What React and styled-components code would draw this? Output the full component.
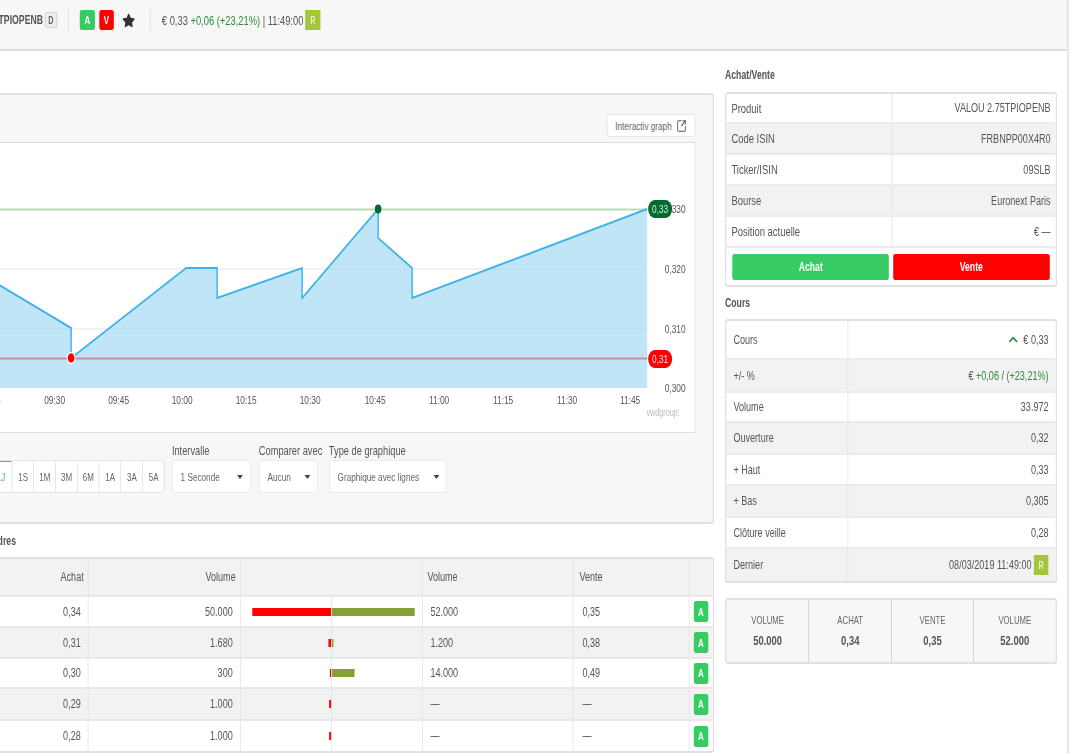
import React from 'react';
import styled, { createGlobalStyle } from 'styled-components';
import { SquareArrowOutUpRight } from 'lucide-react';
import { FaStar, FaChevronUp } from 'react-icons/fa';

const K = 0.725;
const x = (n) => n / K;

const Global = createGlobalStyle`
  html, body { margin: 0; padding: 0; background: #fff; overflow: hidden; }
  * { box-sizing: border-box; }
`;

const Viewport = styled.div`
  width: 1074px; height: 753px; overflow: hidden; background: #fff;
  font-family: "Liberation Sans", Arial, sans-serif; font-size: 12.5px; color: #555;
`;
const Stage = styled.div`
  width: ${x(1069)}px; height: 753px; transform: scaleX(${K}); transform-origin: 0 0;
  border-right: 2px solid #dedede;
`;
const TopBar = styled.header`
  height: 51px; background: #f7f7f7; border-bottom: 2px solid #dedede;
  display: flex; align-items: center; padding-bottom: 9px;
`;
const Title = styled.div`
  flex: none; width: ${x(143)}px; margin-left: ${x(-100)}px; text-align: right;
  font-weight: bold; font-size: 12px; color: #555; white-space: nowrap;
`;
const Badge = styled.span`
  flex: none; width: ${x(12)}px; height: 16px; margin-left: ${x(2)}px; border: 1px solid #ccc; border-radius: 3px;
  background: #eee; color: #666; font-size: 10px; font-weight: bold;
  display: flex; align-items: center; justify-content: center;
`;
const Divider = styled.span`
  flex: none; width: ${x(1)}px; height: ${(p) => p.$h}px; background: #ddd; margin: 0 ${(p) => p.$r}px 0 ${(p) => p.$l}px;
`;
const Square = styled.span`
  flex: none; width: ${x(15)}px; height: ${(p) => p.$h || 20}px; border-radius: 3px;
  background: ${(p) => p.$bg}; color: #fff; font-size: 11px; font-weight: bold;
  display: flex; align-items: center; justify-content: center;
  margin-left: ${(p) => (p.$ml ? x(p.$ml) : 0)}px;
`;
const StarWrap = styled.span`
  flex: none; display: flex; margin-left: ${x(9)}px; color: #333; font-size: 15px;
  transform: scaleX(${(1 / K) * 0.85});
`;
const Quote = styled.span`
  flex: none; font-size: 12.9px; color: #555; white-space: nowrap;
`;
const Up = styled.span`color: #2e8b3d;`;
const RBadge = styled.span`
  flex: none; width: ${x(15)}px; height: 20px; background: #a5c63b; color: #e8f0c8;
  font-size: 10px; font-weight: bold; display: flex; align-items: center; justify-content: center;
  margin-left: ${(p) => x(p.$ml || 2)}px;
`;
const Main = styled.main`
  display: grid; grid-template-columns: ${x(734)}px ${x(332)}px; column-gap: ${x(11)}px;
  margin-left: ${x(-20)}px;
`;
const LeftCol = styled.section`padding-top: 42px;`;
const RightCol = styled.aside`padding-top: 17px;`;
const ChartPanel = styled.div`
  height: 431px; background: #f7f7f7; border: 2px solid #e2e2e2; border-radius: 4px;
  padding: 19px ${x(17)}px 0 ${x(7)}px;
`;
const ChartTools = styled.div`display: flex; justify-content: flex-end; height: 28px;`;
const LinkButton = styled.button`
  font: inherit; font-size: 11.3px; color: #666; background: #fff; width: ${x(89)}px; height: 23px;
  border: 1px solid #e2e2e2; border-radius: 3px; display: flex; align-items: center; justify-content: center; gap: ${x(5)}px; padding: 0;
  svg { color: #555; }
`;
const ChartBox = styled.div`
  height: 291px; background: #fff; border: 1px solid #ddd; overflow: hidden;
`;
const Controls = styled.div`display: flex; align-items: flex-end; margin-top: 11px; padding-left: ${x(1)}px;`;
const Periods = styled.div`
  display: flex; height: 33px; background: #fff; border: 1px solid #e0e0e0; border-radius: 4px; margin-right: ${x(7)}px;
`;
const Period = styled.span`
  width: ${x(21.75)}px; display: flex; align-items: center; justify-content: center; font-size: 11px;
  color: ${(p) => (p.$on ? '#36b1e8' : '#666')};
  border-top: 1px solid ${(p) => (p.$on ? '#36b1e8' : 'transparent')};
  border-left: ${(p) => (p.$first ? 'none' : `${x(1)}px solid #ddd`)};
`;
const Field = styled.div`
  width: ${(p) => x(p.$w)}px; margin-right: ${(p) => x(p.$mr)}px; flex: none;
`;
const FieldLabel = styled.div`font-size: 12.8px; color: #555; white-space: nowrap; line-height: 14px; margin-bottom: 2px;`;
const Select = styled.div`
  height: 33px; background: #fff; border: 1px solid #e6e6e6; border-radius: 4px; font-size: 11.3px; color: #666;
  display: flex; align-items: center; justify-content: space-between; padding: 0 ${x(7)}px 0 ${x(8)}px; white-space: nowrap;
`;
const Caret = styled.i`
  width: 0; height: 0; border-left: ${x(3)}px solid transparent; border-right: ${x(3)}px solid transparent; border-top: 4px solid #444;
`;
const SectionTitle = styled.h3`
  margin: 0; font-size: 12px; font-weight: bold; color: #555; line-height: 14px;
  padding: ${(p) => p.$pt}px 0 ${(p) => p.$pb}px 0;
`;
const OrdersTitle = styled(SectionTitle)`
  width: ${x(36)}px; text-align: right; white-space: nowrap; display: flex; justify-content: flex-end;
`;
const Table = styled.div`
  border: 2px solid #e0e0e0; border-radius: 4px; overflow: hidden;
`;
const OrderRow = styled.div`
  display: grid; grid-template-columns: ${x(107)}px ${x(152)}px ${x(182)}px ${x(151)}px ${x(116)}px 1fr;
  height: ${(p) => p.$h}px; background: ${(p) => (p.$alt ? '#f2f2f2' : '#fff')};
  border-bottom: 2px solid #e8e8e8;
  &:last-child { border-bottom: none; }
`;
const OrderCell = styled.div`
  display: flex; align-items: center; padding: 0 ${(p) => x(p.$pr || 0)}px 0 ${(p) => x(p.$pl || 0)}px;
  justify-content: ${(p) => (p.$right ? 'flex-end' : p.$center ? 'center' : 'flex-start')};
  border-right: ${(p) => (p.$last ? 'none' : `${x(1)}px solid #e2e2e2`)};
`;
const BarCell = styled.div`
  display: grid; grid-template-columns: 1fr 1fr; border-right: ${x(1)}px solid #e2e2e2;
`;
const BarSide = styled.div`
  display: flex; align-items: center; justify-content: ${(p) => (p.$left ? 'flex-end' : 'flex-start')};
  border-left: ${(p) => (p.$left ? 'none' : `${x(1)}px solid #ddd`)};
`;
const Bar = styled.div`height: 8px; background: ${(p) => p.$bg};`;
const InfoRow = styled.div`
  display: grid; grid-template-columns: ${(p) => x(p.$split)}px 1fr; height: ${(p) => p.$h}px;
  background: ${(p) => (p.$alt ? '#f2f2f2' : '#fff')}; border-bottom: 2px solid #ebebeb;
  &:last-child { border-bottom: none; }
`;
const InfoLabel = styled.div`
  display: flex; align-items: center; padding-left: ${(p) => x(p.$pad)}px; border-right: ${x(1)}px solid #e0e0e0;
  font-size: ${(p) => p.$fs || 12.5}px;
`;
const InfoValue = styled.div`
  display: flex; align-items: center; justify-content: flex-end; padding-right: ${(p) => x(p.$pad)}px; white-space: nowrap;
`;
const Arrow = styled.span`
  display: flex; color: #2e8b3d; font-size: 11px; margin-right: ${x(6)}px; transform: scaleX(1.25);
`;
const Actions = styled.div`
  display: flex; gap: ${x(4)}px; padding: 6px ${x(6)}px 5px; background: #fff;
`;
const ActionButton = styled.button`
  flex: 1; height: 26px; border: none; border-radius: 3px; background: ${(p) => p.$bg}; color: #fff;
  font: bold 12px "Liberation Sans", Arial, sans-serif; padding: 0;
`;
const Stats = styled.div`
  margin-top: 15px; height: 66px; display: grid; grid-template-columns: repeat(4, 1fr);
  background: #f7f7f7; border: 2px solid #e0e0e0; border-radius: 4px;
`;
const Stat = styled.div`
  display: flex; flex-direction: column; align-items: center; justify-content: center; gap: 7px;
  border-left: ${(p) => (p.$first ? 'none' : `${x(1)}px solid #c9c9c9`)};
`;
const StatLabel = styled.span`font-size: 10.7px; color: #666;`;
const StatValue = styled.strong`font-size: 13px; color: #555;`;

const X = (sx) => (sx + 11) / K;
const Y = (sy) => sy - 143;
const pts = [[-11, 279], [71, 328], [71, 358], [186, 268], [217, 268], [217, 298], [302, 268], [302, 298], [378, 209], [378, 238], [412, 268], [412, 298], [647, 209]];
const line = pts.map(([a, b]) => `${X(a)},${Y(b)}`).join(' ');
const area = `${X(-11)},${Y(388)} ${line} ${X(647)},${Y(388)}`;
const times = [['09:15', -10], ['09:30', 54.5], ['09:45', 118.5], ['10:00', 182], ['10:15', 246], ['10:30', 310], ['10:45', 375], ['11:00', 439], ['11:15', 503], ['11:30', 567], ['11:45', 630]];
const prices = [['0,330', 209], ['0,320', 269], ['0,310', 329], ['0,300', 388]];

const Chart = () => (
  <svg width={X(696)} height="289" style={{ display: 'block' }}>
    {[269, 329].map((g) => <line key={g} x1={X(-11)} x2={X(647)} y1={Y(g)} y2={Y(g)} stroke="#f7f7f7" strokeWidth="2" />)}
    <polygon points={area} fill="#bfe5f7" />
    {[269, 329].map((g) => <line key={g} x1={X(-11)} x2={X(647)} y1={Y(g)} y2={Y(g)} stroke="rgba(0,0,0,0.02)" strokeWidth="2" />)}
    <line x1={X(-11)} x2={X(647)} y1={Y(209.5)} y2={Y(209.5)} stroke="#b9dcb6" strokeWidth="2" />
    <line x1={X(-11)} x2={X(647)} y1={Y(358.5)} y2={Y(358.5)} stroke="#c48fa0" strokeWidth="2" />
    <polyline points={line} fill="none" stroke="#3db3ea" strokeWidth="2" />
    <circle cx={X(71)} cy={Y(358)} r="5.5" fill="#f00" stroke="#fff" strokeWidth="1.5" />
    <circle cx={X(378)} cy={Y(209)} r="4.5" fill="#006b2d" />
    {times.map(([t, p]) => (
      <text key={t} x={X(p)} y={Y(404)} textAnchor="middle" fontSize="11.5" fill="#555">{t}</text>
    ))}
    {prices.map(([t, p]) => (
      <text key={t} x={X(675)} y={Y(p + 4)} textAnchor="middle" fontSize="11.5" fill="#555">{t}</text>
    ))}
    <rect x={X(648)} y={Y(200)} width={x(24)} height="18" rx="9" fill="#006b2d" />
    <text x={X(660)} y={Y(213)} textAnchor="middle" fontSize="11.5" fill="#d5ecd9">0,33</text>
    <rect x={X(648)} y={Y(350)} width={x(24)} height="18" rx="9" fill="#f00" />
    <text x={X(660)} y={Y(363)} textAnchor="middle" fontSize="11.5" fill="#fde">0,31</text>
    <text x={X(663)} y={Y(416)} textAnchor="middle" fontSize="10" fill="#bbb">vwdgroup:</text>
  </svg>
);

const orders = [
  ['0,34', '50.000', 79, 83, '52.000', '0,35'],
  ['0,31', '1.680', 3, 2, '1.200', '0,38'],
  ['0,30', '300', 1, 23, '14.000', '0,49'],
  ['0,29', '1.000', 2, 0, '—', '—'],
  ['0,28', '1.000', 2, 0, '—', '—'],
];
const heights = [31, 31, 30, 32, 30];

const product = [['Produit', 'VALOU 2.75TPIOPENB', 30], ['Code ISIN', 'FRBNPP00X4R0', 31], ['Ticker/ISIN', '09SLB', 31], ['Bourse', 'Euronext Paris', 31], ['Position actuelle', '€ —', 31]];
const course = [
  ['Cours', <><Arrow><FaChevronUp /></Arrow>€ 0,33</>, 39],
  ['+/- %', <>€&nbsp;<Up>+0,06</Up>&nbsp;/&nbsp;<Up>(+23,21%)</Up></>, 33],
  ['Volume', '33.972', 30],
  ['Ouverture', '0,32', 32],
  ['+ Haut', '0,33', 31],
  ['+ Bas', '0,305', 32],
  ['Clôture veille', '0,28', 31],
  ['Dernier', <>08/03/2019 11:49:00<RBadge>R</RBadge></>, 32],
];

export default function App() {
  return (
    <Viewport>
      <Global />
      <Stage>
        <TopBar>
          <Title>VALOU 2.75TPIOPENB</Title>
          <Badge>D</Badge>
          <Divider $h={26} $l={x(11)} $r={x(11)} />
          <Square $bg="#37cc63">A</Square>
          <Square $bg="#f00" $ml={4}>V</Square>
          <StarWrap><FaStar /></StarWrap>
          <Divider $h={22} $l={x(16)} $r={x(11)} />
          <Quote>€ 0,33 <Up>+0,06 (+23,21%)</Up> | 11:49:00</Quote>
          <RBadge>R</RBadge>
        </TopBar>
        <Main>
          <LeftCol>
            <ChartPanel>
              <ChartTools>
                <LinkButton>Interactiv graph <SquareArrowOutUpRight size={14} strokeWidth={2} /></LinkButton>
              </ChartTools>
              <ChartBox><Chart /></ChartBox>
              <Controls>
                <Periods>
                  {['1J', '1S', '1M', '3M', '6M', '1A', '3A', '5A'].map((p, i) => (
                    <Period key={p} $on={i === 0} $first={i === 0}>{p}</Period>
                  ))}
                </Periods>
                <Field $w={79} $mr={8}>
                  <FieldLabel>Intervalle</FieldLabel>
                  <Select>1 Seconde<Caret /></Select>
                </Field>
                <Field $w={59} $mr={11}>
                  <FieldLabel>Comparer avec</FieldLabel>
                  <Select>Aucun<Caret /></Select>
                </Field>
                <Field $w={118} $mr={0}>
                  <FieldLabel>Type de graphique</FieldLabel>
                  <Select>Graphique avec lignes<Caret /></Select>
                </Field>
              </Controls>
            </ChartPanel>
            <OrdersTitle $pt={10} $pb={9}>Ordres</OrdersTitle>
            <Table>
              <OrderRow $h={38} $alt>
                <OrderCell $right $pr={4}>Achat</OrderCell>
                <OrderCell $right $pr={4}>Volume</OrderCell>
                <OrderCell />
                <OrderCell $pl={5}>Volume</OrderCell>
                <OrderCell $pl={6}>Vente</OrderCell>
                <OrderCell $last />
              </OrderRow>
              {orders.map((o, i) => (
                <OrderRow key={o[0]} $h={heights[i]} $alt={i % 2 === 1}>
                  <OrderCell $right $pr={7}>{o[0]}</OrderCell>
                  <OrderCell $right $pr={7}>{o[1]}</OrderCell>
                  <BarCell>
                    <BarSide $left><Bar $bg="#f00" style={{ width: x(o[2]) }} /></BarSide>
                    <BarSide><Bar $bg="#86a037" style={{ width: x(o[3]) }} /></BarSide>
                  </BarCell>
                  <OrderCell $pl={8}>{o[4]}</OrderCell>
                  <OrderCell $pl={9}>{o[5]}</OrderCell>
                  <OrderCell $last $center><Square $bg="#37cc63" $h={21}>A</Square></OrderCell>
                </OrderRow>
              ))}
            </Table>
          </LeftCol>
          <RightCol>
            <SectionTitle $pt={0} $pb={10}>Achat/Vente</SectionTitle>
            <Table>
              {product.map(([k, v, h], i) => (
                <InfoRow key={k} $h={h} $split={166} $alt={i % 2 === 1}>
                  <InfoLabel $pad={5} $fs={13}>{k}</InfoLabel>
                  <InfoValue $pad={5}>{v}</InfoValue>
                </InfoRow>
              ))}
              <Actions>
                <ActionButton $bg="#37cc63">Achat</ActionButton>
                <ActionButton $bg="#f00">Vente</ActionButton>
              </Actions>
            </Table>
            <SectionTitle $pt={9} $pb={9}>Cours</SectionTitle>
            <Table>
              {course.map(([k, v, h], i) => (
                <InfoRow key={k} $h={h} $split={122} $alt={i % 2 === 1}>
                  <InfoLabel $pad={7}>{k}</InfoLabel>
                  <InfoValue $pad={7}>{v}</InfoValue>
                </InfoRow>
              ))}
            </Table>
            <Stats>
              {[['VOLUME', '50.000'], ['ACHAT', '0,34'], ['VENTE', '0,35'], ['VOLUME', '52.000']].map(([l, v], i) => (
                <Stat key={i} $first={i === 0}>
                  <StatLabel>{l}</StatLabel>
                  <StatValue>{v}</StatValue>
                </Stat>
              ))}
            </Stats>
          </RightCol>
        </Main>
      </Stage>
    </Viewport>
  );
}
